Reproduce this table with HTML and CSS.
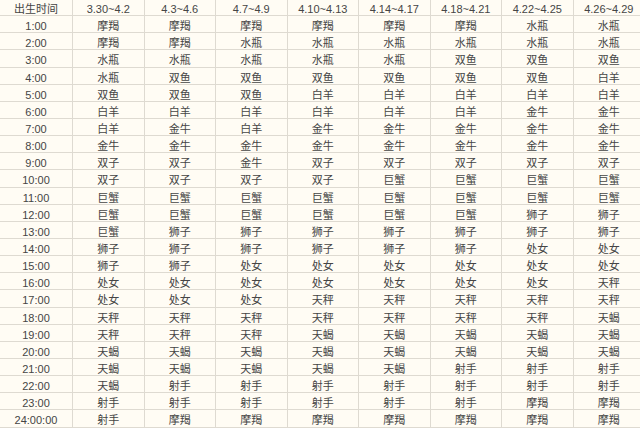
FILE: index.html
```html
<!DOCTYPE html>
<html lang="zh-CN">
<head>
<meta charset="utf-8">
<title>出生时间星座对照表</title>
<link rel="stylesheet" href="styles.css">
</head>
<body>
<table class="zodiac">
<colgroup><col class="c-time"><col span="8" class="c-day"></colgroup>
<tr><td>出生时间</td><td>3.30~4.2</td><td>4.3~4.6</td><td>4.7~4.9</td><td>4.10~4.13</td><td>4.14~4.17</td><td>4.18~4.21</td><td>4.22~4.25</td><td>4.26~4.29</td></tr>
<tr><td>1:00</td><td>摩羯</td><td>摩羯</td><td>摩羯</td><td>摩羯</td><td>摩羯</td><td>摩羯</td><td>水瓶</td><td>水瓶</td></tr>
<tr><td>2:00</td><td>摩羯</td><td>摩羯</td><td>水瓶</td><td>水瓶</td><td>水瓶</td><td>水瓶</td><td>水瓶</td><td>水瓶</td></tr>
<tr><td>3:00</td><td>水瓶</td><td>水瓶</td><td>水瓶</td><td>水瓶</td><td>水瓶</td><td>双鱼</td><td>双鱼</td><td>双鱼</td></tr>
<tr><td>4:00</td><td>水瓶</td><td>双鱼</td><td>双鱼</td><td>双鱼</td><td>双鱼</td><td>双鱼</td><td>双鱼</td><td>白羊</td></tr>
<tr><td>5:00</td><td>双鱼</td><td>双鱼</td><td>双鱼</td><td>白羊</td><td>白羊</td><td>白羊</td><td>白羊</td><td>白羊</td></tr>
<tr><td>6:00</td><td>白羊</td><td>白羊</td><td>白羊</td><td>白羊</td><td>白羊</td><td>白羊</td><td>金牛</td><td>金牛</td></tr>
<tr><td>7:00</td><td>白羊</td><td>金牛</td><td>白羊</td><td>金牛</td><td>金牛</td><td>金牛</td><td>金牛</td><td>金牛</td></tr>
<tr><td>8:00</td><td>金牛</td><td>金牛</td><td>金牛</td><td>金牛</td><td>金牛</td><td>金牛</td><td>金牛</td><td>金牛</td></tr>
<tr><td>9:00</td><td>双子</td><td>双子</td><td>金牛</td><td>双子</td><td>双子</td><td>双子</td><td>双子</td><td>双子</td></tr>
<tr><td>10:00</td><td>双子</td><td>双子</td><td>双子</td><td>双子</td><td>巨蟹</td><td>巨蟹</td><td>巨蟹</td><td>巨蟹</td></tr>
<tr><td>11:00</td><td>巨蟹</td><td>巨蟹</td><td>巨蟹</td><td>巨蟹</td><td>巨蟹</td><td>巨蟹</td><td>巨蟹</td><td>巨蟹</td></tr>
<tr><td>12:00</td><td>巨蟹</td><td>巨蟹</td><td>巨蟹</td><td>巨蟹</td><td>巨蟹</td><td>巨蟹</td><td>狮子</td><td>狮子</td></tr>
<tr><td>13:00</td><td>巨蟹</td><td>狮子</td><td>狮子</td><td>狮子</td><td>狮子</td><td>狮子</td><td>狮子</td><td>狮子</td></tr>
<tr><td>14:00</td><td>狮子</td><td>狮子</td><td>狮子</td><td>狮子</td><td>狮子</td><td>狮子</td><td>处女</td><td>处女</td></tr>
<tr><td>15:00</td><td>狮子</td><td>狮子</td><td>处女</td><td>处女</td><td>处女</td><td>处女</td><td>处女</td><td>处女</td></tr>
<tr><td>16:00</td><td>处女</td><td>处女</td><td>处女</td><td>处女</td><td>处女</td><td>处女</td><td>处女</td><td>天秤</td></tr>
<tr><td>17:00</td><td>处女</td><td>处女</td><td>处女</td><td>天秤</td><td>天秤</td><td>天秤</td><td>天秤</td><td>天秤</td></tr>
<tr><td>18:00</td><td>天秤</td><td>天秤</td><td>天秤</td><td>天秤</td><td>天秤</td><td>天秤</td><td>天秤</td><td>天蝎</td></tr>
<tr><td>19:00</td><td>天秤</td><td>天秤</td><td>天秤</td><td>天蝎</td><td>天蝎</td><td>天蝎</td><td>天蝎</td><td>天蝎</td></tr>
<tr><td>20:00</td><td>天蝎</td><td>天蝎</td><td>天蝎</td><td>天蝎</td><td>天蝎</td><td>天蝎</td><td>天蝎</td><td>天蝎</td></tr>
<tr><td>21:00</td><td>天蝎</td><td>天蝎</td><td>天蝎</td><td>天蝎</td><td>天蝎</td><td>射手</td><td>射手</td><td>射手</td></tr>
<tr><td>22:00</td><td>天蝎</td><td>射手</td><td>射手</td><td>射手</td><td>射手</td><td>射手</td><td>射手</td><td>射手</td></tr>
<tr><td>23:00</td><td>射手</td><td>射手</td><td>射手</td><td>射手</td><td>射手</td><td>射手</td><td>摩羯</td><td>摩羯</td></tr>
<tr><td>24:00:00</td><td>射手</td><td>摩羯</td><td>摩羯</td><td>摩羯</td><td>摩羯</td><td>摩羯</td><td>摩羯</td><td>摩羯</td></tr>
</table>
</body>
</html>
```

FILE: styles.css
```css
html, body {
  margin: 0;
  padding: 0;
  background: #fffcf4;
  overflow: hidden;
}

.zodiac {
  border-collapse: collapse;
  table-layout: fixed;
  width: 646px;
  margin: -2px 0 0 -1px;
  font-family: "Liberation Sans", "Noto Sans CJK SC", sans-serif;
  font-size: 11px;
  color: #454545;
  background: #fffcf4;
}

.c-time {
  width: 73px;
}

.zodiac td {
  border: 1px solid #dedad1;
  text-align: center;
  padding: 4px 0 0;
  height: 12.15px;
  line-height: 12px;
  white-space: nowrap;
  overflow: hidden;
}
```
